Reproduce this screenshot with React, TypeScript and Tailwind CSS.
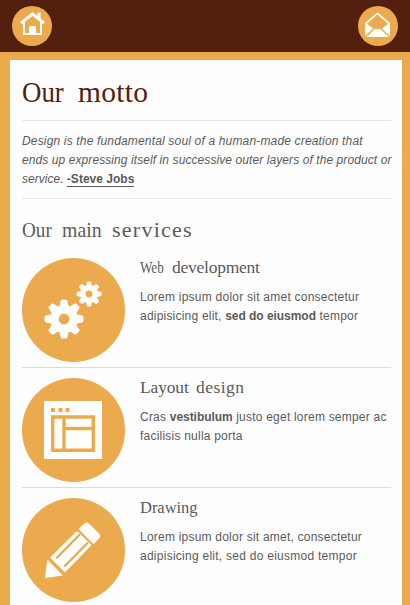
import React from 'react';

type Word = { text: string; className: string };

function Words({ words }: { words: Word[] }) {
  return (
    <>
      {words.map((w, i) => (
        <React.Fragment key={w.text}>
          {i > 0 && ' '}
          <span className={w.className}>{w.text}</span>
        </React.Fragment>
      ))}
    </>
  );
}

function HomeIcon() {
  return (
    <svg viewBox="0 0 40 40" className="size-10" fill="none">
      <path d="M9 17 20.500 8 32 17" stroke="#fff" strokeWidth="3" />
      <path d="M25.500 6.500h3v7l-3-2.500z" fill="#fff" />
      <path d="M12 16v12h17V16" stroke="#fff" strokeWidth="2" />
      <path d="M17 20h7v9h-7z" fill="#fff" />
    </svg>
  );
}

function MailIcon() {
  return (
    <svg viewBox="0 0 40 40" className="size-10" fill="#fff">
      <path d="M8 17.300 19.500 7.300 31 17.300" fill="none" stroke="#fff" strokeWidth="1.700" />
      <path d="M7 16.500 15.300 22.500 7 30zM32 16.500 23.700 22.500 32 30zM16.800 23h5.400l8.800 8H8.500z" />
    </svg>
  );
}

function Gear({ x, y, scale }: { x: number; y: number; scale: number }) {
  return (
    <g transform={`translate(${x} ${y}) scale(${scale})`}>
      {[0, 45, 90, 135, 180, 225, 270, 315].map((a) => (
        <path key={a} transform={`rotate(${a})`} d="M-4.800-11-3.500-18Q-3-19.500-1.500-19.500H1.500Q3-19.500 3.500-18L4.800-11z" fill="#fff" />
      ))}
      <circle r="9.700" fill="none" stroke="#fff" strokeWidth="8.600" />
    </g>
  );
}

function GearsIcon() {
  return (
    <svg viewBox="0 0 103 104" className="h-[104px] w-[103px]">
      <Gear x={42} y={61} scale={1} />
      <Gear x={67} y={36} scale={0.64} />
    </svg>
  );
}

function LayoutIcon() {
  return (
    <svg viewBox="0 0 103 104" className="h-[104px] w-[103px]">
      <path d="M22 23h58v58H22z" fill="#fff" />
      <path d="M29 30h4v4h-4zM36.500 30h4v4h-4zM43.500 30h4v4h-4z" fill="#ebaa4d" />
      <path d="M30.700 39h40.600v33.300H30.700zM42 39v33.500M42 50.500h29.500" fill="none" stroke="#ebaa4d" strokeWidth="3.400" />
    </svg>
  );
}

function PencilIcon() {
  return (
    <svg viewBox="0 0 103 104" className="h-[104px] w-[103px]">
      <g fill="#fff">
        <path d="M23 80 25.300 61.500 41 77.500z" />
        <path d="M56.500 31 61.500 26Q64.500 23 67.500 26L77 35.500Q79.500 38 77 40.500L71.500 46.300z" />
        <path d="M28 59.500 55 33 69.500 47 43 74.500z" />
      </g>
      <path d="M34.300 60.200 58 36.300M42.300 68.500 66 44.500" stroke="#ebaa4d" strokeWidth="2.300" />
    </svg>
  );
}

function Service({ icon, title, last = false, children }: {
  icon: React.ReactNode;
  title: Word[];
  last?: boolean;
  children: React.ReactNode;
}) {
  return (
    <article className={`flex h-[110px] mb-[10px] ${last ? '' : 'border-b border-[#dcdcdc]'}`}>
      <div className="h-[104px] w-[103px] shrink-0 rounded-full bg-[#ebaa4d]">{icon}</div>
      <div className="ml-[15px] whitespace-nowrap">
        <h3 className="flex h-[30px] gap-2 font-['Liberation_Serif',serif] text-[17.500px] leading-[19px]">
          <Words words={title} />
        </h3>
        <p className="text-[12px] leading-[19px] tracking-[0.220px]">{children}</p>
      </div>
    </article>
  );
}

export default function App() {
  return (
    <div className="h-[605px] w-[410px] overflow-hidden bg-[#ebaa4d] font-['Liberation_Sans',Arial,sans-serif] text-[#5a5a5a]">
      <header className="flex h-[52px] items-start justify-between bg-[#531f0e] px-3 pt-1.5">
        <a className="size-10 rounded-full bg-[#ebaa4d]" aria-label="Home"><HomeIcon /></a>
        <a className="size-10 rounded-full bg-[#ebaa4d]" aria-label="Contact"><MailIcon /></a>
      </header>
      <main className="ml-[10px] mr-[8px] mt-2 h-[545px] overflow-hidden bg-[#fefefe] pl-3 pr-[11px]">
        <h1 className="flex h-[60px] gap-[14px] whitespace-nowrap pt-[15px] font-['Liberation_Serif',serif] text-[29.500px] leading-[34px] text-[#531f0e]">
          <Words words={[{ text: 'Our', className: 'w-[42px] origin-left scale-x-[0.910]' }, { text: 'motto', className: 'w-[70px] tracking-[0.300px]' }]} />
        </h1>
        <p className="h-[79px] whitespace-nowrap border-y border-[#e6e6e6] pt-[11px] text-[12px] italic leading-[19px] tracking-[0.100px]">
          <span className="tracking-[0.165px]">Design is the fundamental soul of a human-made creation that</span><br />
          <span className="tracking-[0.085px]">ends up expressing itself in successive outer layers of the product or</span><br />
          <span className="tracking-[0.020px]">service. </span><a className="border-b border-[#5a5a5a] font-bold not-italic tracking-[0.010px]">-Steve Jobs</a>
        </p>
        <h2 className="flex h-[59px] gap-[10px] whitespace-nowrap pt-[18px] font-['Liberation_Serif',serif] text-[22px] leading-[25px]">
          <Words words={[
            { text: 'Our', className: 'w-[30px] origin-left scale-x-[0.870]' },
            { text: 'main', className: 'w-[40px] origin-left scale-x-[0.900]' },
            { text: 'services', className: 'w-[80px] tracking-[1.250px]' },
          ]} />
        </h2>
        <Service icon={<GearsIcon />} title={[
          { text: 'Web', className: 'w-[24px] origin-left scale-x-[0.750]' },
          { text: 'development', className: 'w-[88px] tracking-[-0.250px]' },
        ]}>
          <span className="tracking-[0.240px]">Lorem ipsum dolor sit amet consectetur</span><br /><span className="tracking-[0.210px]">adipisicing elit, <b className="tracking-[-0.040px]">sed do eiusmod</b> tempor</span>
        </Service>
        <Service icon={<LayoutIcon />} title={[
          { text: 'Layout', className: 'w-[48px] tracking-[-0.150px]' },
          { text: 'design', className: 'w-[48px] tracking-[0.450px]' },
        ]}>
          <span className="tracking-[0.220px]">Cras <b className="tracking-[-0.050px]">vestibulum</b> justo eget lorem semper ac</span><br />facilisis nulla porta
        </Service>
        <Service last icon={<PencilIcon />} title={[{ text: 'Drawing', className: 'w-[56px] origin-left scale-x-[0.940]' }]}>
          Lorem ipsum dolor sit amet, consectetur<br />
          <span className="tracking-[0.260px]">adipisicing elit, sed do eiusmod tempor</span>
        </Service>
      </main>
    </div>
  );
}
